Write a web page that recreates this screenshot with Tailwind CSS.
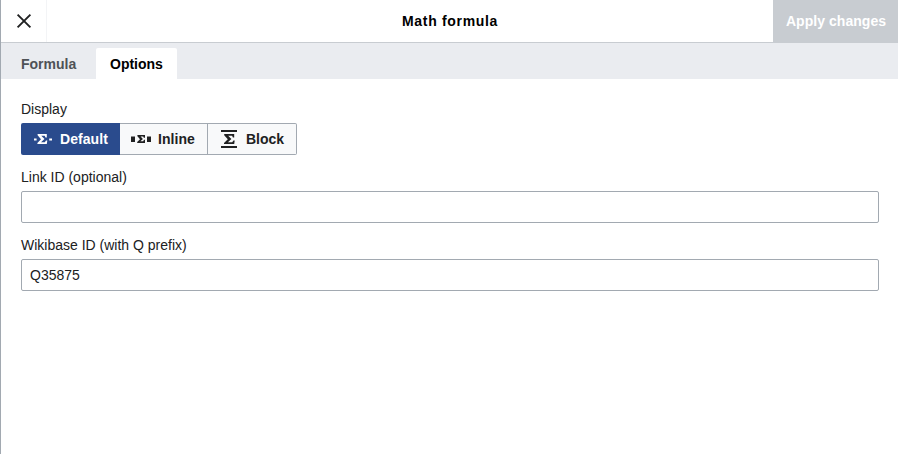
<!DOCTYPE html>
<html lang="en">
<head>
<meta charset="utf-8">
<title>Math formula</title>
<script src="https://cdn.jsdelivr.net/npm/@tailwindcss/browser@4"></script>
</head>
<body class="bg-white">
<div class="flex h-[454px] w-[898px] flex-col overflow-hidden border-l border-[#a2a9b1] bg-white font-['Liberation_Sans',Arial,sans-serif] text-[14px] leading-[20px] text-[#202122]">
  <header class="flex h-[43px] shrink-0 border-b border-[#c8ccd1]">
    <button aria-label="Close" class="flex h-[42px] w-[46px] shrink-0 items-center border-r border-[#f3f4f6] pl-[13px]">
      <svg class="h-5 w-5" viewBox="0 0 20 20" fill="none" stroke="#202122" stroke-width="1.9"><path d="M3.6 3.6 16.4 16.4M16.4 3.6 3.6 16.4"/></svg>
    </button>
    <h1 class="flex-1 pt-[11px] pl-[355px] font-bold whitespace-nowrap text-black"><span class="tracking-[0.68px]">Math formula</span></h1>
    <button class="h-[43px] w-[125px] shrink-0 bg-[#c8ccd1] pb-[2px] pl-[1px] font-bold whitespace-nowrap text-white tracking-[0.05px]">Apply changes</button>
  </header>
  <nav class="flex h-[36px] shrink-0 items-end bg-[#eaecf0] pl-[5px] font-bold">
    <button class="h-[31px] w-[90px] pl-[15px] text-left text-[#4f5256]">Formula</button>
    <button class="h-[31px] w-[81px] rounded-t-[2px] bg-white pl-[14px] text-left text-black">Options</button>
  </nav>
  <main class="flex flex-col pt-5 pr-[19px] pl-5">
    <label class="h-[24px]">Display</label>
    <div class="flex h-8 font-bold">
      <button class="flex w-[99px] items-center rounded-l-[2px] bg-[#2a4b8d] pl-3 text-white tracking-[0.07px]">
        <svg class="mr-[7px] h-5 w-5" viewBox="0 0 20 20" fill="currentColor"><path d="M1 9.5h2.6v2H1zM16.2 9.5h2.8v2h-2.8zM4.6 5h9.2v3.4h-1.3l-.8-1.7H8.3l3.2 3.2-3.5 3.4h3.8l1.2-1.9h1.3L13.8 15H4.4v-1.1L8 10.3 4.6 6.3z"/></svg>Default
      </button>
      <button class="flex w-[88px] items-center border-y border-r border-[#a2a9b1] bg-[#f8f9fa] pl-[11px] tracking-[0.07px]">
        <svg class="mr-[7px] h-5 w-5" viewBox="0 0 20 20" fill="currentColor"><path d="M0 7.5h4v5.5H0zM16 7.5h4v5.5h-4zM6.4 6H14v2.8h-1.2l-.6-1.2H9.6l2.3 2.3-2.5 2.4h2.8l.8-1.5H14V14H6.2v-1.1L9 10.2 6.4 7.2z"/></svg>Inline
      </button>
      <button class="flex w-[89px] items-center rounded-r-[2px] border-y border-r border-[#a2a9b1] bg-[#f8f9fa] pl-[11px]">
        <svg class="mr-[7px] h-5 w-5" viewBox="0 0 20 20" fill="currentColor"><path d="M2 1h16v2H2zM2 17h16v2H2zM5.2 5h10v3.4h-1.3l-.8-1.7H9.2l3.2 3.2-3.5 3.4h4.3l1.2-1.9h1.3L15.2 15H5v-1.1l3.8-3.6-3.6-4z"/></svg>Block
      </button>
    </div>
    <label for="link" class="mt-[12px] h-[24px]">Link ID (optional)</label>
    <input id="link" class="h-8 w-full rounded-[2px] border border-[#a2a9b1] px-2 text-[#202122]">
    <label for="wikibase" class="mt-[12px] h-[24px]">Wikibase ID (with Q prefix)</label>
    <input id="wikibase" value="Q35875" class="h-8 w-full rounded-[2px] border border-[#a2a9b1] px-2 text-[#202122]">
  </main>
</div>
</body>
</html>
